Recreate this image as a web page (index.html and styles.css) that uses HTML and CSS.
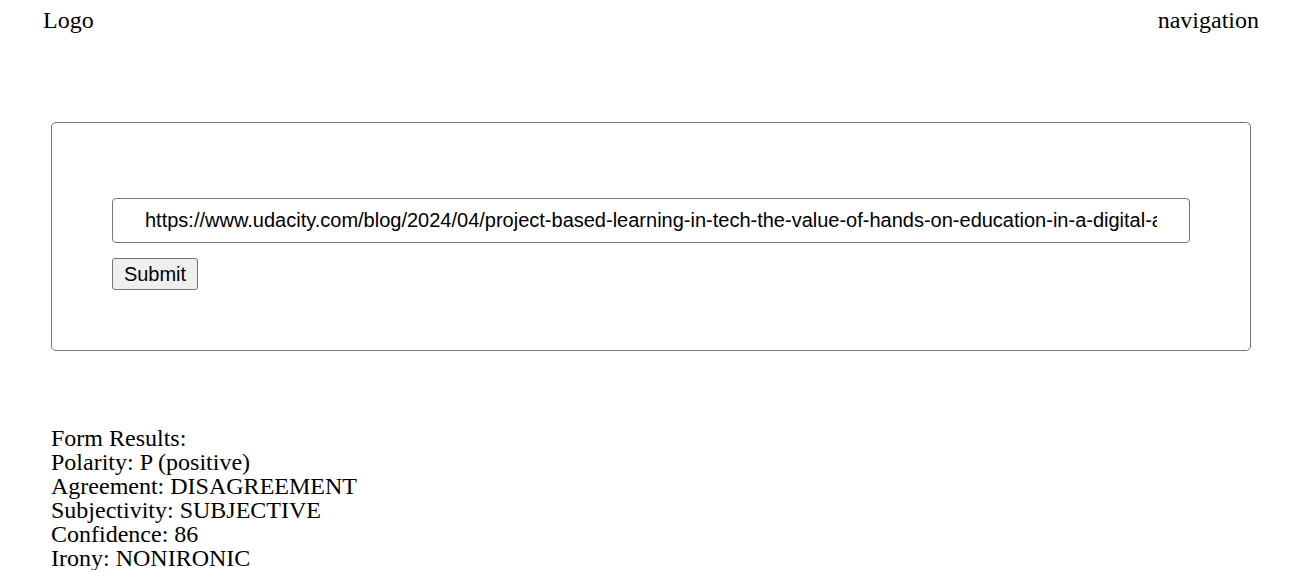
FILE: index.html
```html
<!DOCTYPE html>
<html>
<head>
<meta charset="utf-8">
<link rel="stylesheet" href="styles.css">
</head>
<body>
<header class="site-header">
  <div class="logo">Logo</div>
  <nav class="nav">navigation</nav>
</header>
<main class="main">
  <section class="form-card">
    <form class="url-form" onsubmit="return false">
      <input class="url-input" type="text" value="https://www.udacity.com/blog/2024/04/project-based-learning-in-tech-the-value-of-hands-on-education-in-a-digital-age.html">
      <button class="submit-btn" type="submit">Submit</button>
    </form>
  </section>
  <section class="results">
    <div>Form Results:</div>
    <div>Polarity: P (positive)</div>
    <div>Agreement: DISAGREEMENT</div>
    <div>Subjectivity: SUBJECTIVE</div>
    <div>Confidence: 86</div>
    <div>Irony: NONIRONIC</div>
  </section>
</main>
</body>
</html>
```
FILE: styles.css
```css
html, body {
  margin: 0;
  padding: 0;
  background: #fff;
  color: #000;
  font-family: "Liberation Serif", "Times New Roman", serif;
  font-size: 24px;
}
.site-header {
  display: flex;
  justify-content: space-between;
  align-items: center;
  padding: 6px 33px 0 43px;
  line-height: 28px;
}
.main {
  padding: 88px 41px 0 51px;
}
.form-card {
  box-sizing: border-box;
  width: 1200px;
  height: 229px;
  border: 1px solid #767676;
  border-radius: 5px;
  padding: 75px 60px 0 60px;
}
.url-form {
  display: flex;
  flex-direction: column;
  align-items: flex-start;
  gap: 15px;
}
.url-input {
  box-sizing: border-box;
  width: 1078px;
  height: 45px;
  padding: 0 32px;
  border: 1px solid #767676;
  border-radius: 4px;
  font-family: "Liberation Sans", Arial, sans-serif;
  font-size: 20px;
  color: #000;
  outline: none;
}
.submit-btn {
  box-sizing: border-box;
  width: 86px;
  height: 32px;
  padding: 1px 0;
  text-align: center;
  font-family: "Liberation Sans", Arial, sans-serif;
  font-size: 20px;
  color: #000;
  background: #efefef;
  border: 1px solid #767676;
  border-radius: 3px;
}
.results {
  margin-top: 75px;
  line-height: 24px;
}
```
